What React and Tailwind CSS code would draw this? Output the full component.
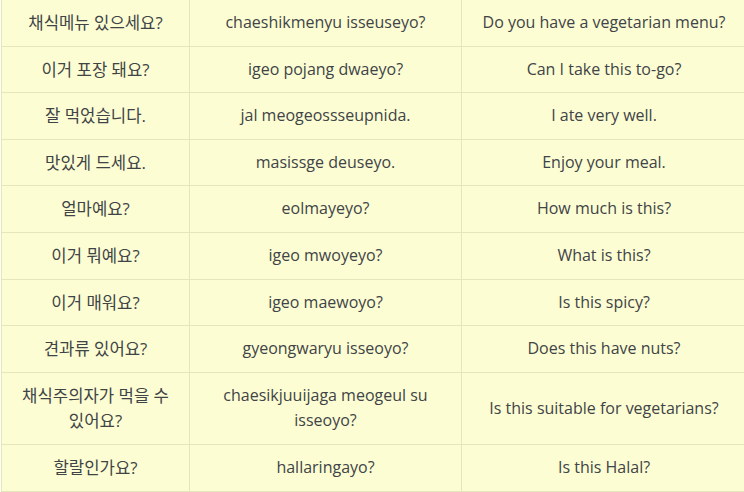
import React from "react";

const rows = [
  ["채식메뉴 있으세요?", "chaeshikmenyu isseuseyo?", "Do you have a vegetarian menu?"],
  ["이거 포장 돼요?", "igeo pojang dwaeyo?", "Can I take this to-go?"],
  ["잘 먹었습니다.", "jal meogeossseupnida.", "I ate very well."],
  ["맛있게 드세요.", "masissge deuseyo.", "Enjoy your meal."],
  ["얼마예요?", "eolmayeyo?", "How much is this?"],
  ["이거 뭐예요?", "igeo mwoyeyo?", "What is this?"],
  ["이거 매워요?", "igeo maewoyo?", "Is this spicy?"],
  ["견과류 있어요?", "gyeongwaryu isseoyo?", "Does this have nuts?"],
  [
    <>채식주의자가 먹을 수<br />있어요?</>,
    <>chaesikjuuijaga meogeul su<br />isseoyo?</>,
    "Is this suitable for vegetarians?",
  ],
  ["할랄인가요?", "hallaringayo?", "Is this Halal?"],
];

export default function App() {
  return (
    <div className="w-[744px] h-[492px] overflow-hidden bg-white">
      <table
        className="ml-[1px] -mt-[1px] w-[746px] border-collapse table-fixed bg-[#fdfdd3] text-[16px] leading-[25.6px] text-[#3f4447]"
        style={{ fontFamily: '"Open Sans", "Noto Sans CJK KR", sans-serif' }}
      >
        <colgroup>
          <col className="w-[188px]" />
          <col className="w-[272px]" />
          <col />
        </colgroup>
        <tbody>
          {rows.map((r, i) => (
            <tr key={i}>
              {r.map((c, j) => (
                <td
                  key={j}
                  className={
                    j === 0
                      ? "border border-[#e6e6bc] px-[8px] py-[10px] text-center align-middle text-[16.7px]"
                      : "border border-[#e6e6bc] px-[10px] py-[10px] text-center align-middle"
                  }
                >
                  {c}
                </td>
              ))}
            </tr>
          ))}
        </tbody>
      </table>
    </div>
  );
}
